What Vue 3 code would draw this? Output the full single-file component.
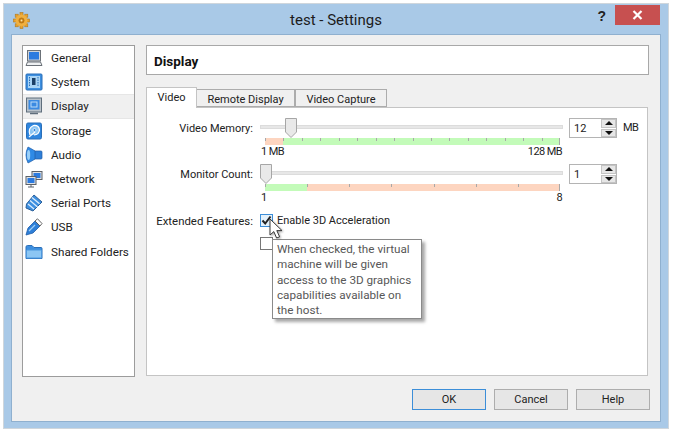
<script setup>
const items = [
  { name: 'General', icon: 'general' },
  { name: 'System', icon: 'system' },
  { name: 'Display', icon: 'display', active: true },
  { name: 'Storage', icon: 'storage' },
  { name: 'Audio', icon: 'audio' },
  { name: 'Network', icon: 'network' },
  { name: 'Serial Ports', icon: 'serial' },
  { name: 'USB', icon: 'usb' },
  { name: 'Shared Folders', icon: 'folder' }
]
const memorySegs = Array.from({ length: 16 }, (_, i) => i === 0 ? 'bad' : 'good')
const monitorSegs = Array.from({ length: 7 }, (_, i) => i === 0 ? 'good' : 'bad')
</script>

<template>
  <div class="page">
    <div class="window">
      <header class="titlebar">
        <svg class="app-icon" width="17" height="17" viewBox="0 0 17 17">
          <g fill="#e8a02a" stroke="#b07a22" stroke-width=".6">
            <rect x="7" y="0.5" width="3" height="3" />
            <rect x="7" y="13.5" width="3" height="3" />
            <rect x="0.5" y="7" width="3" height="3" />
            <rect x="13.5" y="7" width="3" height="3" />
            <rect x="2.2" y="2.2" width="3" height="3" />
            <rect x="11.8" y="2.2" width="3" height="3" />
            <rect x="2.2" y="11.8" width="3" height="3" />
            <rect x="11.8" y="11.8" width="3" height="3" />
          </g>
          <circle cx="8.5" cy="8.5" r="6" fill="#f0b040" />
          <circle cx="8.5" cy="8.5" r="2.6" fill="#c87e14" stroke="#a86a10" stroke-width=".6" />
          <circle cx="8.5" cy="8.5" r="1" fill="#fbe3a8" />
        </svg>
        <div class="title">test - Settings</div>
        <div class="help-mark">?</div>
        <div class="close">
          <svg width="11" height="10" viewBox="0 0 11 10"><path d="M1.5 1 L9.5 9 M9.5 1 L1.5 9" stroke="#fff" stroke-width="2.2" /></svg>
        </div>
      </header>

      <div class="client">
        <div class="columns">
          <nav class="sidebar">
            <div v-for="item in items" :key="item.name" class="nav-item" :class="{ active: item.active }">
              <svg class="nav-icon" width="18" height="18" viewBox="0 0 18 18">
                <template v-if="item.icon === 'general'">
                  <rect x="2.5" y="1.5" width="13" height="10.5" fill="#cfd3d8" stroke="#6b7178" />
                  <rect x="4" y="3" width="10" height="7.5" fill="#2c7be0" />
                  <path d="M2.5 13 H15.5 L17 16.5 H1 Z" fill="#eef0f2" stroke="#6b7178" />
                </template>
                <template v-else-if="item.icon === 'system'">
                  <rect x="1" y="1" width="16" height="16" rx="1" fill="#3d8fe0" stroke="#2b6fb8" />
                  <rect x="3" y="3" width="12" height="12" fill="#a9d4f5" />
                  <rect x="7" y="5" width="3.5" height="7" fill="#1b3f66" />
                  <path d="M4.5 4 V14 M13 4 V14" stroke="#2b6fb8" stroke-dasharray="1.5 1" />
                </template>
                <template v-else-if="item.icon === 'display'">
                  <rect x="1.5" y="1" width="15" height="14" fill="#b9c2ca" stroke="#5f6e7c" />
                  <rect x="3.5" y="3" width="11" height="9.5" fill="#3a8ae2" />
                  <rect x="6" y="5" width="6" height="5" fill="none" stroke="#bcdcf7" />
                  <path d="M5 16.5 H13" stroke="#5f6e7c" stroke-width="1.5" />
                </template>
                <template v-else-if="item.icon === 'storage'">
                  <rect x="1.5" y="1" width="15" height="16" rx="1.5" fill="#2f86de" stroke="#2b6fb8" />
                  <path d="M5 13 Q2.5 6 8.5 3.5 Q14 3 14.5 8 Q14 12.5 9 13" fill="#8cc6f3" stroke="#fff" stroke-width="1.2" />
                  <circle cx="9.5" cy="8" r="1.5" fill="#2f86de" stroke="#fff" stroke-width=".7" />
                  <path d="M4 15 L10 10" stroke="#fff" stroke-width="1.1" />
                </template>
                <template v-else-if="item.icon === 'audio'">
                  <path d="M9 5 H16 Q17 5 17 6 V12 Q17 13 16 13 H9 Z" fill="#2e7fd8" stroke="#1f5da8" stroke-width=".7" />
                  <path d="M3 1 Q7 3 10 5 V13 Q7 15 3 17 Q1 13 1 9 Q1 5 3 1 Z" fill="#2f8ae6" stroke="#1f5da8" stroke-width=".7" />
                  <ellipse cx="3.6" cy="9" rx="1.6" ry="5" fill="#9bd0f8" />
                </template>
                <template v-else-if="item.icon === 'network'">
                  <rect x="7" y="1.5" width="10" height="8" fill="#dfe2e5" stroke="#5b6168" />
                  <rect x="8.5" y="3" width="7" height="5" fill="#2c7be0" />
                  <rect x="1" y="6.5" width="10" height="8" fill="#dfe2e5" stroke="#5b6168" />
                  <rect x="2.5" y="8" width="7" height="5" fill="#2c7be0" />
                  <path d="M6 14.5 V17 M3 17 H9" stroke="#5b6168" />
                </template>
                <template v-else-if="item.icon === 'serial'">
                  <path d="M9 1 L17 8 L8 17 L1 14 L1.5 10 Z" fill="#3d8fe0" stroke="#2b5f98" />
                  <path d="M7 3.5 L14.5 9.8 M5 6.5 L12.5 13 M3 10 L9 15" stroke="#dcecfb" stroke-width="1.3" />
                </template>
                <template v-else-if="item.icon === 'usb'">
                  <path d="M1 17 L3 10 L10 3 L15 8 L8 15 Z" fill="#2e7fd8" stroke="#1f5da8" stroke-width=".8" />
                  <path d="M10 3 L12.5 .8 L17 5.5 L15 8 Z" fill="#fff" stroke="#555" stroke-width=".9" />
                  <path d="M4 13 L10 7" stroke="#9fd0f7" stroke-width="1.2" />
                </template>
                <template v-else>
                  <path d="M1 4 Q1 2.5 2.5 2.5 H7 L9 4.5 H16 Q17 4.5 17 5.5 V15.5 H1 Z" fill="#3d8fe0" stroke="#2b6fb8" />
                  <path d="M1.5 7 H16.5 V15 H1.5 Z" fill="#8cc6f3" stroke="#4d98de" />
                </template>
              </svg>
              <span>{{ item.name }}</span>
            </div>
          </nav>

          <main class="content">
            <div class="page-head">Display</div>

            <div class="tabs">
              <div class="tab current">Video</div>
              <div class="tab w-remote">Remote Display</div>
              <div class="tab w-capture">Video Capture</div>
            </div>

            <section class="panel">
              <div class="row">
                <div class="row-label">Video Memory:</div>
                <div class="slider">
                  <div class="track"></div>
                  <svg class="thumb memory-thumb" width="12" height="20" viewBox="0 0 12 20">
                    <path d="M.5 .5 H11.5 V14 L6 19.5 L.5 14 Z" fill="#e9e9e9" stroke="#a6a6a6" />
                  </svg>
                  <div class="ruler">
                    <div v-for="(s, i) in memorySegs" :key="i" class="seg" :class="s"></div>
                  </div>
                  <div class="ends"><span>1 MB</span><span>128 MB</span></div>
                </div>
                <div class="spin">
                  <span class="spin-value">12</span>
                  <span class="spin-arrows"><i class="up"></i><i class="down"></i></span>
                </div>
                <div class="unit">MB</div>
              </div>

              <div class="row">
                <div class="row-label">Monitor Count:</div>
                <div class="slider">
                  <div class="track"></div>
                  <svg class="thumb monitor-thumb" width="12" height="20" viewBox="0 0 12 20">
                    <path d="M.5 .5 H11.5 V14 L6 19.5 L.5 14 Z" fill="#e9e9e9" stroke="#a6a6a6" />
                  </svg>
                  <div class="ruler">
                    <div v-for="(s, i) in monitorSegs" :key="i" class="seg" :class="s"></div>
                  </div>
                  <div class="ends"><span>1</span><span>8</span></div>
                </div>
                <div class="spin">
                  <span class="spin-value">1</span>
                  <span class="spin-arrows"><i class="up"></i><i class="down"></i></span>
                </div>
                <div class="unit"></div>
              </div>

              <div class="features">
                <div class="row-label">Extended Features:</div>
                <div class="checks">
                  <div class="check-row">
                    <span class="box hover">
                      <svg width="11" height="11" viewBox="0 0 11 11"><path d="M1.5 5.5 L4.2 8.5 L9.5 1.5" fill="none" stroke="#222" stroke-width="2" /></svg>
                    </span>
                    <span>Enable 3D Acceleration</span>
                  </div>
                  <div class="check-row second">
                    <span class="box"></span>
                    <span>Enable 2D Video Acceleration</span>
                  </div>
                </div>
              </div>

              <div class="tooltip">When checked, the virtual machine will be given access to the 3D graphics capabilities available on the host.</div>
              <svg class="cursor" width="16" height="23" viewBox="0 0 16 23">
                <path d="M1 1 V17 L4.8 13.6 L7.6 20 L10.6 18.8 L7.8 12.6 L13 12.6 Z" fill="#fff" stroke="#3a3a3a" stroke-width="1" />
              </svg>
            </section>
          </main>
        </div>

        <footer class="footer">
          <button class="btn primary">OK</button>
          <button class="btn">Cancel</button>
          <button class="btn">Help</button>
        </footer>
      </div>
    </div>
  </div>
</template>

<style>
html, body { margin: 0; background: #fff; }
</style>

<style scoped>
.page {
  width: 673px;
  height: 432px;
  box-sizing: border-box;
  padding: 4px 5px 4px 4px;
  background: #fff;
  font-family: Roboto, "Open Sans", sans-serif;
  font-size: 11px;
  color: #222;
  overflow: hidden;
}
.window {
  height: 424px;
  box-sizing: border-box;
  background: #a9c9e7;
  box-shadow: 0 0 0 1px #cfd6dc;
  padding: 0 8px 8px;
  display: flex;
  flex-direction: column;
}
.titlebar {
  height: 31px;
  flex: none;
  display: flex;
  align-items: flex-start;
  position: relative;
}
.app-icon { margin: 8px 0 0 1px; }
.title {
  position: absolute;
  left: 0;
  right: 0;
  top: 6px;
  text-align: center;
  font-size: 15px;
  line-height: 20px;
  color: #1c1c1c;
}
.help-mark {
  margin-left: auto;
  margin-right: 9px;
  margin-top: 3px;
  font-family: "Liberation Sans", sans-serif;
  font-weight: 700;
  font-size: 14px;
  line-height: 18px;
  color: #222;
}
.close {
  width: 45px;
  height: 20px;
  margin-top: 1px;
  background: #c75050;
  display: flex;
  align-items: center;
  justify-content: center;
}
.client {
  flex: 1;
  background: #f0f0f0;
  box-shadow: 0 0 0 1px #8fb0cf;
  padding: 10px 10px 11px;
  display: flex;
  flex-direction: column;
}
.columns {
  display: flex;
  gap: 11px;
  height: 332px;
}
.sidebar {
  width: 113px;
  box-sizing: border-box;
  background: #fff;
  border: 1px solid #9c9c9c;
  font-size: 11.7px;
}
.nav-item {
  height: 24.2px;
  display: flex;
  align-items: center;
  gap: 8px;
  padding-left: 2px;
  box-sizing: border-box;
}
.nav-item.active {
  background: #f0f0f0;
  border-top: 1px solid #e6e6e6;
  border-bottom: 1px solid #e6e6e6;
}
.nav-icon { flex: none; }
.content {
  width: 503px;
  display: flex;
  flex-direction: column;
}
.page-head {
  height: 30px;
  box-sizing: border-box;
  background: #fff;
  border: 1px solid #a8a8a8;
  font-weight: 700;
  font-size: 13.5px;
  line-height: 30px;
  padding-left: 7px;
  color: #111;
}
.tabs {
  display: flex;
  align-items: flex-end;
  margin-top: 12px;
  height: 20px;
  position: relative;
  z-index: 1;
}
.tab {
  height: 18px;
  box-sizing: border-box;
  background: #f0f0f0;
  border: 1px solid #acacac;
  border-left: 0;
  text-align: center;
  line-height: 19px;
}
.tab.current {
  width: 51px;
  height: 21px;
  margin-bottom: -1px;
  background: #fff;
  border-color: #c4c4c4;
  border-left: 1px solid #c4c4c4;
  border-bottom: 0;
  line-height: 20px;
}
.w-remote { width: 98px; }
.w-capture { width: 92px; border-left: 1px solid #acacac; }
.panel {
  position: relative;
  width: 502px;
  height: 269px;
  box-sizing: border-box;
  background: #fff;
  border: 1px solid #c4c4c4;
  padding: 10px 0 0 0;
}
.row {
  display: grid;
  grid-template-columns: 106px 303px 48px 1fr;
  column-gap: 6px;
  height: 46px;
  align-items: start;
}
.row-label {
  text-align: right;
  line-height: 20px;
  height: 20px;
  padding-top: 1px;
}
.slider { position: relative; margin-left: 1px; width: 303px; }
.track {
  height: 4px;
  margin: 7px 0 9px;
  background: #e7e7e7;
  box-shadow: inset 0 0 0 1px #dcdcdc;
}
.thumb { position: absolute; top: 0; }
.memory-thumb { left: 25px; }
.monitor-thumb { left: 0; }
.ruler {
  display: flex;
  width: 295px;
  height: 7px;
  margin-left: 5px;
}
.seg { flex: 1; position: relative; }
.seg::before {
  content: "";
  position: absolute;
  left: 0;
  top: 0;
  width: 1px;
  height: 3px;
  background: #a8a8a8;
}
.seg:last-child::after {
  content: "";
  position: absolute;
  right: 0;
  top: 0;
  width: 1px;
  height: 7px;
  background: #a8a8a8;
}
.good { background: #c3fbb9; }
.bad { background: #fdd5c0; }
.ends {
  display: flex;
  justify-content: space-between;
  margin: 0 1px 0 1px;
  line-height: 14px;
  letter-spacing: -.6px;
}
.spin {
  height: 20px;
  box-sizing: border-box;
  background: #fff;
  border: 1px solid #b4b4b4;
  display: flex;
  align-items: center;
  justify-content: space-between;
  margin-left: 1px;
  width: 48px;
}
.spin-value { padding-left: 4px; }
.spin-arrows {
  width: 15px;
  height: 18px;
  display: flex;
  flex-direction: column;
  gap: 1px;
}
.spin-arrows i {
  flex: 1;
  background: #e6e6e6;
  box-shadow: inset 0 0 0 1px #c4c4c4;
  display: flex;
  align-items: center;
  justify-content: center;
}
.spin-arrows i::before {
  content: "";
  border-left: 4px solid transparent;
  border-right: 4px solid transparent;
}
.up::before { border-bottom: 4px solid #111; }
.down::before { border-top: 4px solid #111; }
.unit { line-height: 20px; margin-left: 1px; letter-spacing: -.6px; }
.features {
  display: grid;
  grid-template-columns: 106px 1fr;
  column-gap: 7px;
  margin-top: 3px;
}
.features .row-label { line-height: 15px; height: 14px; font-size: 11.4px; }
.checks { display: flex; flex-direction: column; gap: 9px; }
.check-row {
  display: flex;
  align-items: center;
  gap: 4px;
  height: 14px;
  line-height: 15px;
}
.check-row.second { line-height: 11px; }
.box {
  width: 13px;
  height: 13px;
  box-sizing: border-box;
  background: #fff;
  border: 1px solid #777;
  display: flex;
  align-items: center;
  justify-content: center;
  flex: none;
}
.box.hover { border-color: #3c8ed8; background: #e4f1fb; }
.tooltip {
  position: absolute;
  left: 125px;
  top: 131px;
  width: 150px;
  height: 80px;
  box-sizing: border-box;
  background: #fff;
  border: 1px solid #8a8a8a;
  box-shadow: 3px 3px 3px rgba(0, 0, 0, .35);
  padding: 2px 4px 0;
  color: #575757;
  font-size: 11.7px;
  line-height: 15.3px;
}
.cursor {
  position: absolute;
  left: 122px;
  top: 110px;
  filter: drop-shadow(1px 1px 1px rgba(0, 0, 0, .35));
}
.footer {
  display: flex;
  justify-content: flex-end;
  gap: 8px;
  margin-top: 12px;
}
.btn {
  width: 74px;
  height: 21px;
  padding: 0;
  background: #e6e6e6;
  border: 1px solid #adadad;
  font: inherit;
  color: #222;
}
.btn.primary { border-color: #3c8ed8; }
</style>
